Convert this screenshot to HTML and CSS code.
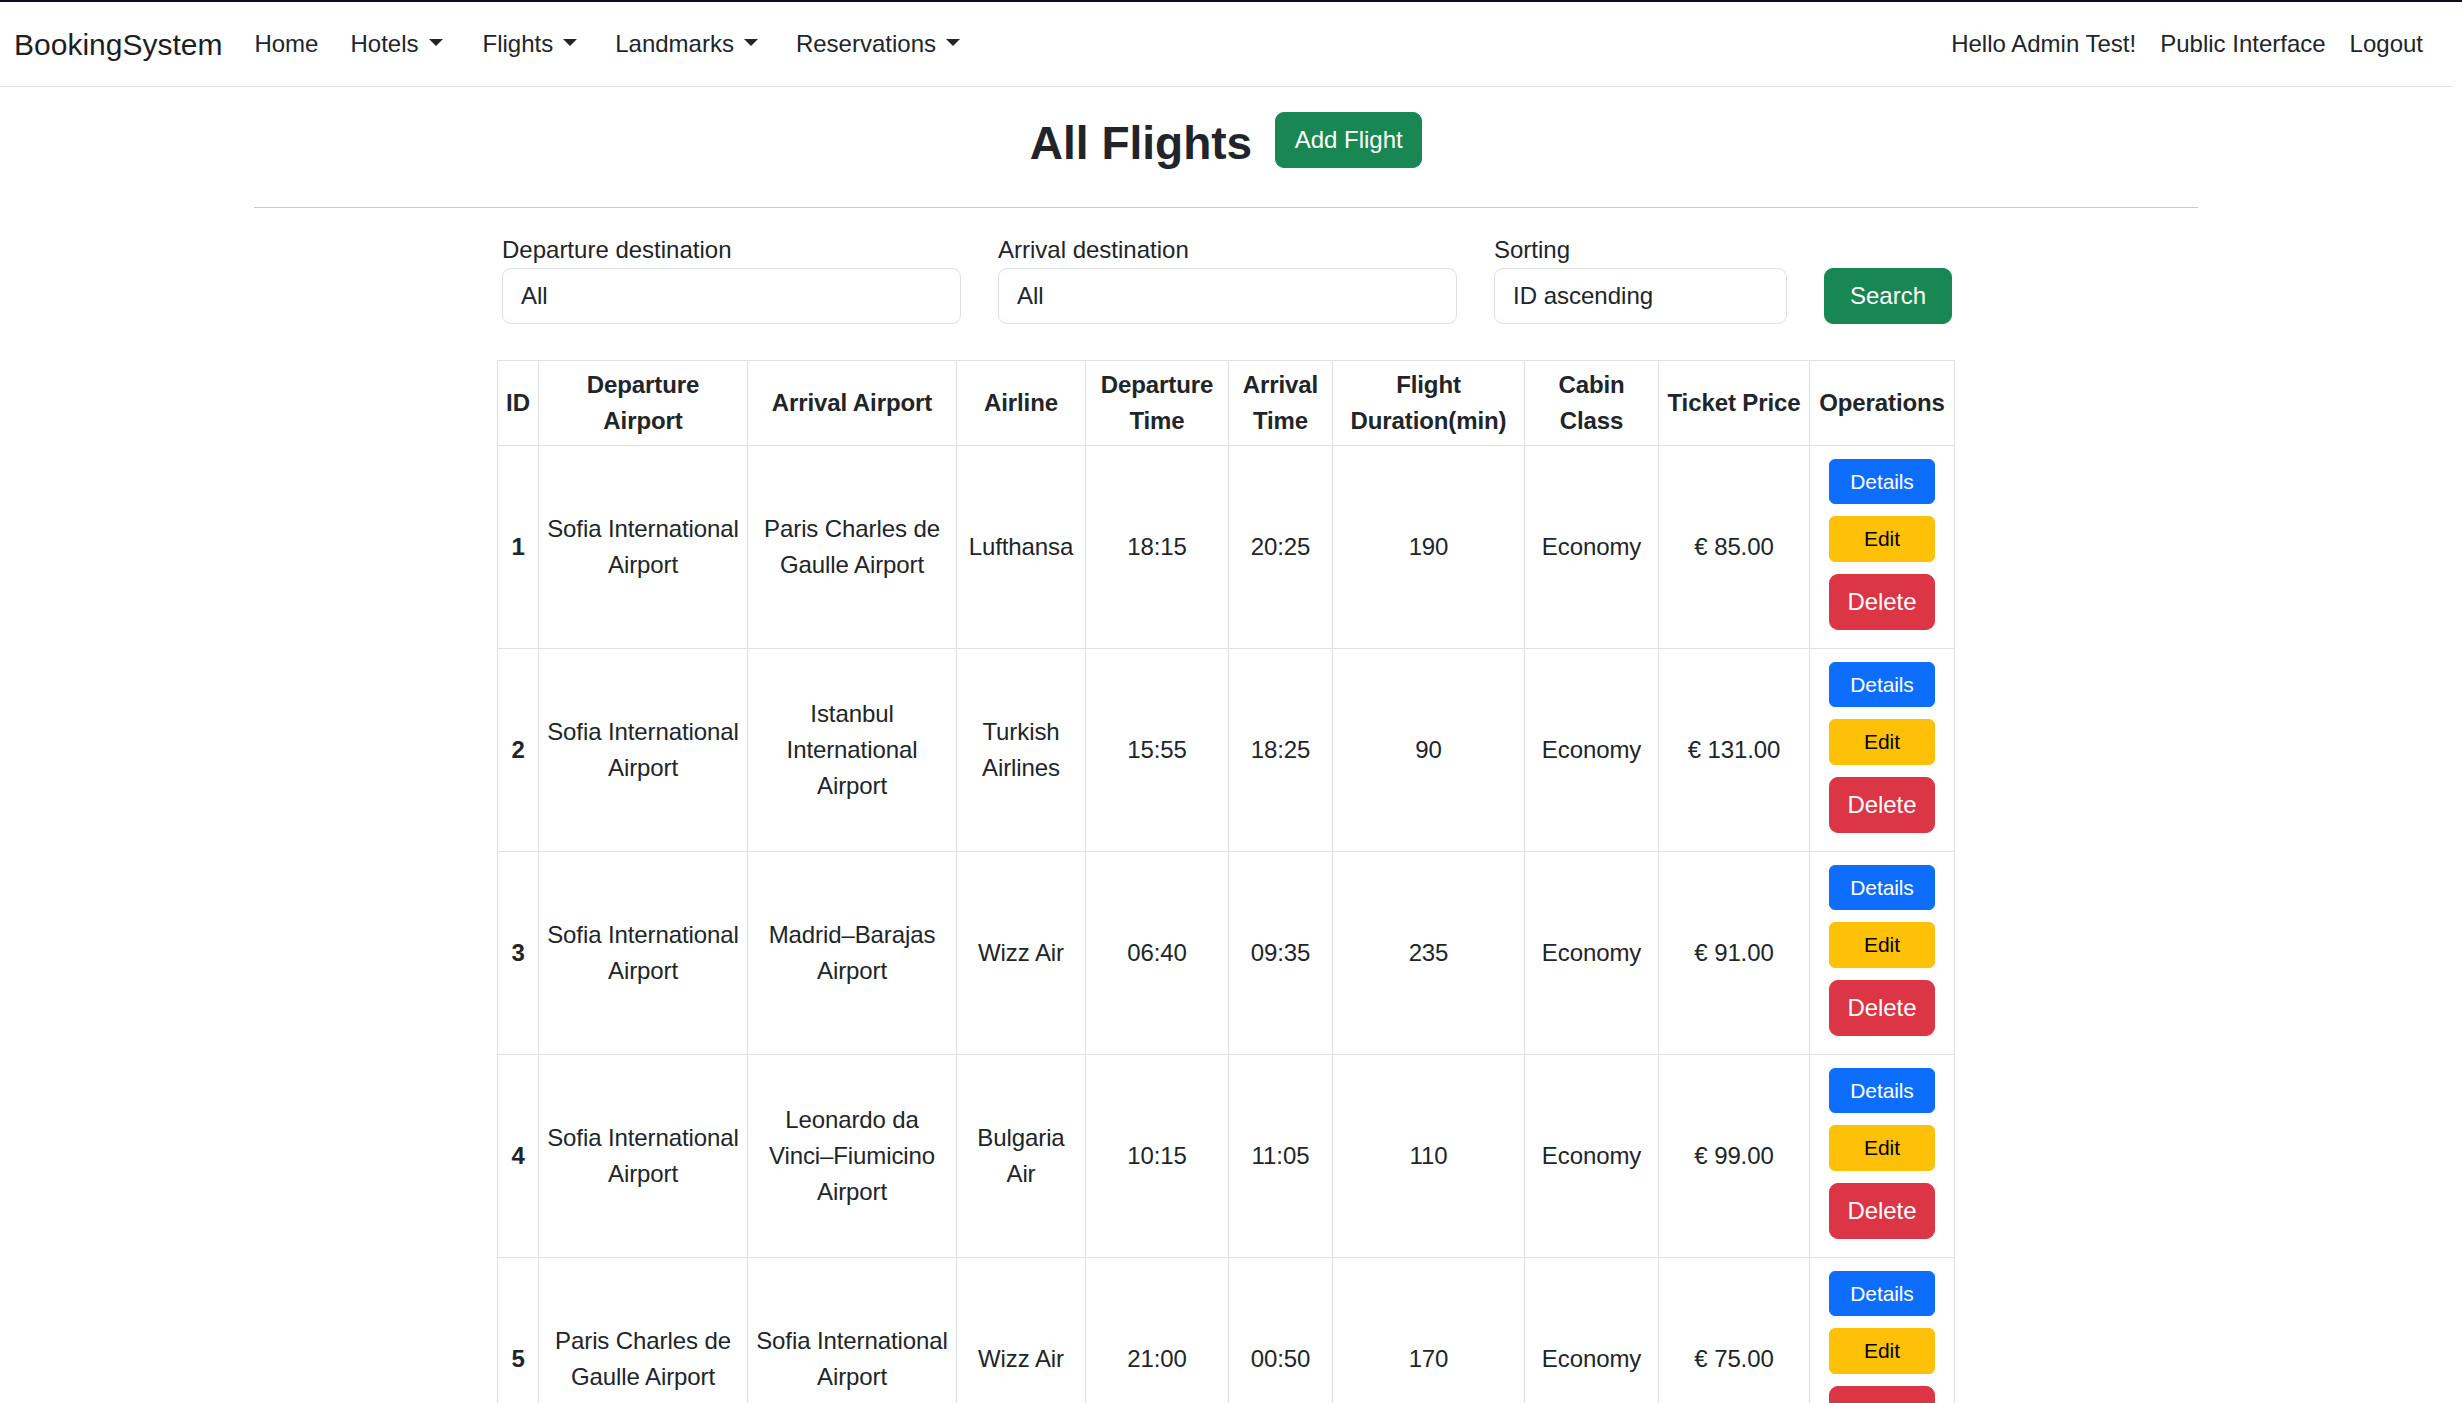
FILE: index.html
```html
<!DOCTYPE html>
<html lang="en">
<head>
<meta charset="utf-8">
<title>All Flights - BookingSystem</title>
<link rel="stylesheet" href="styles.css">
</head>
<body>
<div class="page">
  <nav class="navbar">
    <div class="nav-left">
      <a class="brand" href="#">BookingSystem</a>
      <a class="nav-link" href="#">Home</a>
      <a class="nav-link" href="#">Hotels<span class="caret"></span></a>
      <a class="nav-link" href="#">Flights<span class="caret"></span></a>
      <a class="nav-link" href="#">Landmarks<span class="caret"></span></a>
      <a class="nav-link" href="#">Reservations<span class="caret"></span></a>
    </div>
    <div class="nav-right">
      <span class="nav-link">Hello Admin Test!</span>
      <a class="nav-link" href="#">Public Interface</a>
      <a class="nav-link" href="#">Logout</a>
    </div>
  </nav>

  <main class="main">
    <div class="title-row">
      <h2 class="title">All Flights</h2>
      <a class="btn btn-success" href="#">Add Flight</a>
    </div>
    <hr class="divider">

    <div class="content">
      <form class="filters">
        <div class="field field-wide">
          <label class="form-label">Departure destination</label>
          <input class="form-control" type="text" value="All">
        </div>
        <div class="field field-wide">
          <label class="form-label">Arrival destination</label>
          <input class="form-control" type="text" value="All">
        </div>
        <div class="field field-sort">
          <label class="form-label">Sorting</label>
          <input class="form-control" type="text" value="ID ascending">
        </div>
        <button class="btn btn-success btn-search" type="button">Search</button>
      </form>

      <table class="flights">
        <colgroup>
          <col class="c-id"><col class="c-dep"><col class="c-arr"><col class="c-air">
          <col class="c-dt"><col class="c-at"><col class="c-dur"><col class="c-cab">
          <col class="c-price"><col class="c-ops">
        </colgroup>
        <thead>
          <tr>
            <th>ID</th><th>Departure Airport</th><th>Arrival Airport</th><th>Airline</th>
            <th>Departure Time</th><th>Arrival Time</th><th>Flight Duration(min)</th>
            <th>Cabin Class</th><th>Ticket Price</th><th>Operations</th>
          </tr>
        </thead>
        <tbody>
          <tr>
            <th>1</th><td>Sofia International Airport</td><td>Paris Charles de Gaulle Airport</td><td>Lufthansa</td>
            <td>18:15</td><td>20:25</td><td>190</td><td>Economy</td><td>€ 85.00</td>
            <td class="ops-cell"><div class="ops"><a class="btn btn-sm btn-primary" href="#">Details</a><a class="btn btn-sm btn-warning" href="#">Edit</a><a class="btn btn-danger" href="#">Delete</a></div></td>
          </tr>
          <tr>
            <th>2</th><td>Sofia International Airport</td><td>Istanbul International Airport</td><td>Turkish Airlines</td>
            <td>15:55</td><td>18:25</td><td>90</td><td>Economy</td><td>€ 131.00</td>
            <td class="ops-cell"><div class="ops"><a class="btn btn-sm btn-primary" href="#">Details</a><a class="btn btn-sm btn-warning" href="#">Edit</a><a class="btn btn-danger" href="#">Delete</a></div></td>
          </tr>
          <tr>
            <th>3</th><td>Sofia International Airport</td><td>Madrid–Barajas Airport</td><td>Wizz Air</td>
            <td>06:40</td><td>09:35</td><td>235</td><td>Economy</td><td>€ 91.00</td>
            <td class="ops-cell"><div class="ops"><a class="btn btn-sm btn-primary" href="#">Details</a><a class="btn btn-sm btn-warning" href="#">Edit</a><a class="btn btn-danger" href="#">Delete</a></div></td>
          </tr>
          <tr>
            <th>4</th><td>Sofia International Airport</td><td>Leonardo da Vinci–Fiumicino Airport</td><td>Bulgaria Air</td>
            <td>10:15</td><td>11:05</td><td>110</td><td>Economy</td><td>€ 99.00</td>
            <td class="ops-cell"><div class="ops"><a class="btn btn-sm btn-primary" href="#">Details</a><a class="btn btn-sm btn-warning" href="#">Edit</a><a class="btn btn-danger" href="#">Delete</a></div></td>
          </tr>
          <tr>
            <th>5</th><td>Paris Charles de Gaulle Airport</td><td>Sofia International Airport</td><td>Wizz Air</td>
            <td>21:00</td><td>00:50</td><td>170</td><td>Economy</td><td>€ 75.00</td>
            <td class="ops-cell"><div class="ops"><a class="btn btn-sm btn-primary" href="#">Details</a><a class="btn btn-sm btn-warning" href="#">Edit</a><a class="btn btn-danger" href="#">Delete</a></div></td>
          </tr>
        </tbody>
      </table>
    </div>
  </main>
</div>
</body>
</html>
```
FILE: styles.css
```css
* { box-sizing: border-box; }

body {
  margin: 0;
  font-family: "Liberation Sans", Arial, sans-serif;
  font-size: 24px;
  line-height: 1.5;
  color: #212529;
  background: #fff;
}

a { text-decoration: none; color: inherit; }

.page {
  border-top: 2px solid #0e0e18;
  padding-right: 10px;
}

/* Navbar */
.navbar {
  display: flex;
  align-items: center;
  justify-content: space-between;
  padding: 12px 17px 12px 14px;
  border-bottom: 1px solid #dee2e6;
  margin-bottom: 24px;
}
.nav-left, .nav-right { display: flex; align-items: center; }
.brand {
  font-size: 30px;
  line-height: 45px;
  padding: 7px 0;
  margin-right: 14px;
  color: #1c1f23;
}
.nav-link {
  display: inline-block;
  padding: 12px 18px;
  line-height: 36px;
  color: #212529;
}
.nav-left .nav-link:nth-child(2) { padding-right: 14px; }
.nav-left .nav-link:nth-child(3) { padding-right: 21px; }
.nav-left .nav-link:nth-child(n+4) { padding-left: 19px; padding-right: 19px; }
.nav-right .nav-link { padding: 12px 12px; }
.caret {
  display: inline-block;
  margin-left: 10px;
  vertical-align: 0.255em;
  border-top: 0.3em solid #212529;
  border-right: 0.3em solid transparent;
  border-left: 0.3em solid transparent;
  border-bottom: 0;
}

/* Main */
.main { width: 1944px; margin: 0 auto; }
.title-row {
  display: flex;
  justify-content: center;
  align-items: center;
  gap: 23px;
}
.title {
  margin: 0 0 -4px;
  padding-top: 4px;
  font-size: 46px;
  font-weight: 700;
  line-height: 57.6px;
  color: #212529;
}
.divider {
  margin: 38px 0 24px;
  border: 0;
  border-top: 1px solid #c8c9ca;
}

/* Buttons */
.btn {
  display: inline-flex;
  align-items: center;
  justify-content: center;
  font-family: inherit;
  font-size: 24px;
  line-height: 36px;
  padding: 9px 18px;
  border: 1px solid transparent;
  border-radius: 9px;
  color: #fff;
  cursor: pointer;
}
.btn-success { background: #198754; border-color: #198754; width: 147px; height: 56px; }
.btn-primary { background: #0d6efd; border-color: #0d6efd; }
.btn-warning { background: #ffc107; border-color: #ffc107; color: #000; }
.btn-danger { background: #dc3545; border-color: #dc3545; width: 106px; height: 56px; }
.btn-sm {
  width: 106px;
  height: 45.5px;
  font-size: 21px;
  line-height: 31.5px;
  padding: 6px 12px;
  border-radius: 6px;
}

/* Filters */
.content { width: 1458px; margin: 0 auto; }
.filters {
  display: flex;
  align-items: flex-end;
  gap: 37px;
  padding-left: 5px;
}
.field { display: flex; flex-direction: column; }
.field-wide { width: 459px; }
.field-sort { width: 293px; }
.form-label { display: block; line-height: 36px; }
.form-control {
  height: 56px;
  width: 100%;
  padding: 9px 18px;
  font-family: inherit;
  font-size: 24px;
  line-height: 36px;
  color: #212529;
  border: 1px solid #dee2e6;
  border-radius: 9px;
  background: #fff;
}
.btn-search { width: 128px; height: 56px; }

/* Table */
.flights {
  margin-top: 36px;
  width: 1457px;
  table-layout: fixed;
  border-collapse: collapse;
  letter-spacing: -0.1px;
}
.flights th, .flights td {
  border: 1px solid #dee2e6;
  padding: 6px;
  text-align: center;
  vertical-align: middle;
  line-height: 36px;
}
.flights th { font-weight: 700; }
.c-id { width: 41px; }
.c-dep { width: 209px; }
.c-arr { width: 209px; }
.c-air { width: 129px; }
.c-dt { width: 143px; }
.c-at { width: 104px; }
.c-dur { width: 192px; }
.c-cab { width: 134px; }
.c-price { width: 151px; }
.c-ops { width: 145px; }

.ops {
  display: flex;
  flex-direction: column;
  align-items: center;
  gap: 12px;
  padding: 7px 0 12px;
}
```
